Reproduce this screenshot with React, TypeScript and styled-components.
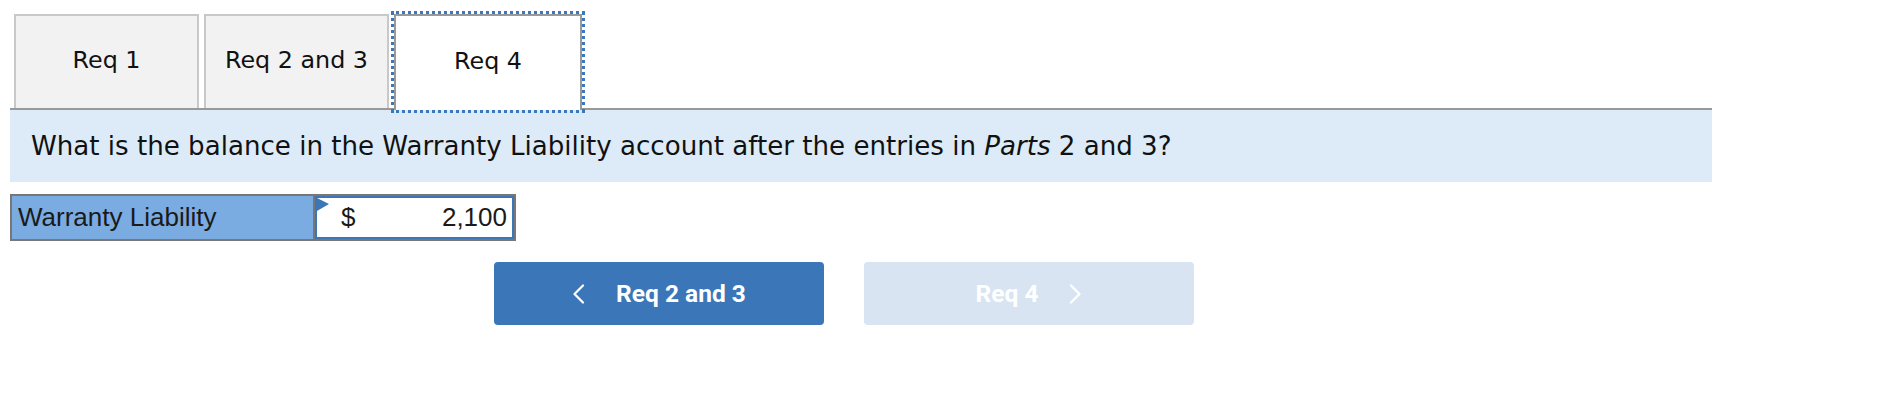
import React from "react";
import styled, { createGlobalStyle } from "styled-components";

const Global = createGlobalStyle`
  html, body { margin: 0; padding: 0; background: #ffffff; }
  * { box-sizing: border-box; }
`;

const Page = styled.div`
  padding: 14px 0 0 10px;
  width: 1712px;
`;

const TabBar = styled.div`
  display: flex;
  align-items: flex-end;
  gap: 5px;
  padding-left: 4px;
  border-bottom: 2px solid #999999;
`;

const Tab = styled.button<{ $active?: boolean; $w: number }>`
  width: ${(p) => p.$w}px;
  height: ${(p) => (p.$active ? 96 : 94)}px;
  margin-bottom: ${(p) => (p.$active ? -2 : 0)}px;
  border: 2px solid ${(p) => (p.$active ? "#999999" : "#c8c8c8")};
  border-bottom: none;
  background: ${(p) => (p.$active ? "#ffffff" : "#f2f2f2")};
  outline: ${(p) => (p.$active ? "3px dotted #3b77bd" : "none")};
  outline-offset: 0;
  font-family: "DejaVu Sans", Verdana, sans-serif;
  font-size: 23.8px;
  color: #111111;
  display: flex;
  align-items: center;
  justify-content: center;
  padding: 0 0 4px 0;
  cursor: pointer;
`;

const Question = styled.div`
  height: 72px;
  background: #dcebf7;
  display: flex;
  align-items: center;
  padding-left: 21px;
  font-family: "DejaVu Sans", Verdana, sans-serif;
  font-size: 26.1px;
  color: #111111;
  em { font-style: italic; }
`;

const Table = styled.div`
  margin-top: 12px;
  width: 506px;
  height: 47px;
  border: 2px solid #777777;
  display: flex;
`;

const LabelCell = styled.div`
  width: 303px;
  background: #7aace2;
  border-right: 2px solid #777777;
  display: flex;
  align-items: center;
  padding-left: 6px;
  font-family: "Liberation Sans", Arial, sans-serif;
  font-size: 26px;
  color: #1a1a1a;
`;

const InputCell = styled.div`
  position: relative;
  flex: 1;
  border: 2px solid #3a76b8;
  background: #ffffff;
  display: flex;
  align-items: center;
  padding: 0 5px 0 24px;
  font-family: "Liberation Sans", Arial, sans-serif;
  font-size: 26px;
  color: #1a1a1a;
`;

const Flag = styled.svg`
  position: absolute;
  left: 0;
  top: 0;
`;

const Dollar = styled.span`
  width: 20px;
`;

const Amount = styled.span`
  flex: 1;
  text-align: right;
`;

const Buttons = styled.div`
  margin-top: 21px;
  display: flex;
  gap: 40px;
  padding-left: 484px;
`;

const NavButton = styled.button<{ $disabled?: boolean }>`
  width: 330px;
  height: 63px;
  border: none;
  border-radius: 4px;
  background: ${(p) => (p.$disabled ? "#d8e4f1" : "#3b76b8")};
  color: #ffffff;
  font-family: Roboto, "Liberation Sans", sans-serif;
  font-weight: 700;
  font-size: 24.5px;
  display: flex;
  align-items: center;
  justify-content: center;
  gap: 31px;
  padding: 0;
  cursor: ${(p) => (p.$disabled ? "default" : "pointer")};
`;

const Chevron = ({ dir }: { dir: "left" | "right" }) => (
  <svg width="13" height="20" viewBox="0 0 13 20">
    <polyline
      points={dir === "left" ? "11,1.5 2.5,10 11,18.5" : "2,1.5 10.5,10 2,18.5"}
      fill="none"
      stroke="#ffffff"
      strokeWidth="2.2"
      strokeLinecap="round"
      strokeLinejoin="round"
    />
  </svg>
);

export default function App() {
  return (
    <Page>
      <Global />
      <TabBar>
        <Tab $w={185}>Req 1</Tab>
        <Tab $w={185}>Req 2 and 3</Tab>
        <Tab $w={188} $active>
          Req 4
        </Tab>
      </TabBar>
      <Question>
        <span>
          What is the balance in the Warranty Liability account after the entries in <em>Parts</em> 2 and 3?
        </span>
      </Question>
      <Table>
        <LabelCell>Warranty Liability</LabelCell>
        <InputCell>
          <Flag width="12" height="13" viewBox="0 0 12 13">
            <polygon points="0,0 12,6 0,13" fill="#3a76b8" />
          </Flag>
          <Dollar>$</Dollar>
          <Amount>2,100</Amount>
        </InputCell>
      </Table>
      <Buttons>
        <NavButton>
          <Chevron dir="left" />
          <span>Req 2 and 3</span>
        </NavButton>
        <NavButton $disabled>
          <span>Req 4</span>
          <Chevron dir="right" />
        </NavButton>
      </Buttons>
    </Page>
  );
}
